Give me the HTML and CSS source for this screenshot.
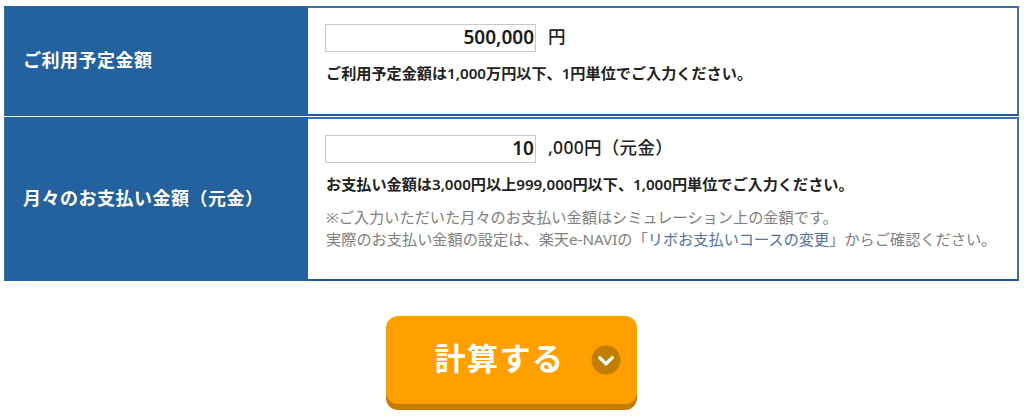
FILE: index.html
```html
<!DOCTYPE html>
<html lang="ja">
<head>
<meta charset="utf-8">
<title>ご利用予定金額</title>
<link rel="stylesheet" href="styles.css">
</head>
<body>
<main class="page">
  <section class="form-table">
    <div class="row row-first">
      <div class="label">ご利用予定金額</div>
      <div class="cell">
        <div class="field"><input class="amount" type="text" value="500,000" readonly><span class="unit">円</span></div>
        <p class="note">ご利用予定金額は1,000万円以下、1円単位でご入力ください。</p>
      </div>
    </div>
    <div class="row row-second">
      <div class="label">月々のお支払い金額（元金）</div>
      <div class="cell">
        <div class="field"><input class="amount" type="text" value="10" readonly><span class="unit">,000円（元金）</span></div>
        <p class="note">お支払い金額は3,000円以上999,000円以下、1,000円単位でご入力ください。</p>
        <p class="caution">※ご入力いただいた月々のお支払い金額はシミュレーション上の金額です。<br>実際のお支払い金額の設定は、楽天e-NAVIの「<a href="#">リボお支払いコースの変更</a>」からご確認ください。</p>
      </div>
    </div>
  </section>
  <div class="actions">
    <button class="calc" type="button"><span class="calc-text">計算する</span>
      <svg class="calc-icon" viewBox="0 0 30 30" width="30" height="30" aria-hidden="true"><circle cx="15" cy="15" r="14.5" fill="#c27e00"/><path d="M8.7 12.6 15 18.9 21.3 12.6" fill="none" stroke="#fff" stroke-width="3.4" stroke-linecap="round" stroke-linejoin="round"/></svg>
    </button>
  </div>
</main>
</body>
</html>
```
FILE: styles.css
```css
* { box-sizing: border-box; }
html, body { margin: 0; padding: 0; background: #fff; }
body {
  width: 1024px;
  height: 418px;
  overflow: hidden;
  font-family: "Noto Sans", "Noto Sans CJK JP", sans-serif;
  color: #222;
}
.page { padding: 6px 5px 0 4px; }
.form-table { display: flex; flex-direction: column; gap: 1px; }
.row {
  display: flex;
  border: 2px solid #3f6fa8;
  border-left-width: 1px;
  border-bottom-color: #2a5a94;
}
.row-first { height: 110px; }
.row-second { height: 164px; }
.label {
  width: 303px;
  flex: none;
  margin: -2px 0;
  padding: 0 0 5px 18px;
  background: #24619f;
  color: #fff;
  font-size: 18px;
  font-weight: 700;
  letter-spacing: 0.5px;
  display: flex;
  align-items: center;
}
.cell { flex: 1; padding: 16px 0 0 17px; background: #fff; }
.field { display: flex; align-items: center; height: 28px; }
.amount {
  width: 211px;
  height: 28px;
  padding: 0 1px 3px 0;
  border: 1px solid #c8c8c8;
  background: #fff;
  text-align: right;
  font-family: inherit;
  font-size: 19px;
  font-weight: 600;
  color: #1a1a1a;
  outline: none;
}
.unit { margin-left: 12px; padding-bottom: 5px; font-size: 17.5px; font-weight: 500; letter-spacing: 0.3px; }
.note { margin: 11px 0 0; padding-left: 1px; font-size: 15.15px; font-weight: 600; line-height: 20px; }
.caution { margin: 12px 0 0; padding-left: 1px; font-size: 15.2px; line-height: 22px; color: #808080; }
.caution a { color: #56719f; text-decoration: none; }
.actions { display: flex; justify-content: center; padding-top: 35px; padding-right: 1px; }
.calc {
  width: 251px;
  border: 0;
  border-radius: 12px;
  background: #ffa000;
  box-shadow: 0 6px 0 #c27e00;
  height: 88px;
  display: flex;
  align-items: center;
  gap: 26px;
  padding: 0 0 0 49px;
  font-family: inherit;
  color: #fff;
}
.calc-text { padding-bottom: 8px; font-size: 31px; font-weight: 700; letter-spacing: 1.5px; }
.calc-icon { flex: none; }
```
